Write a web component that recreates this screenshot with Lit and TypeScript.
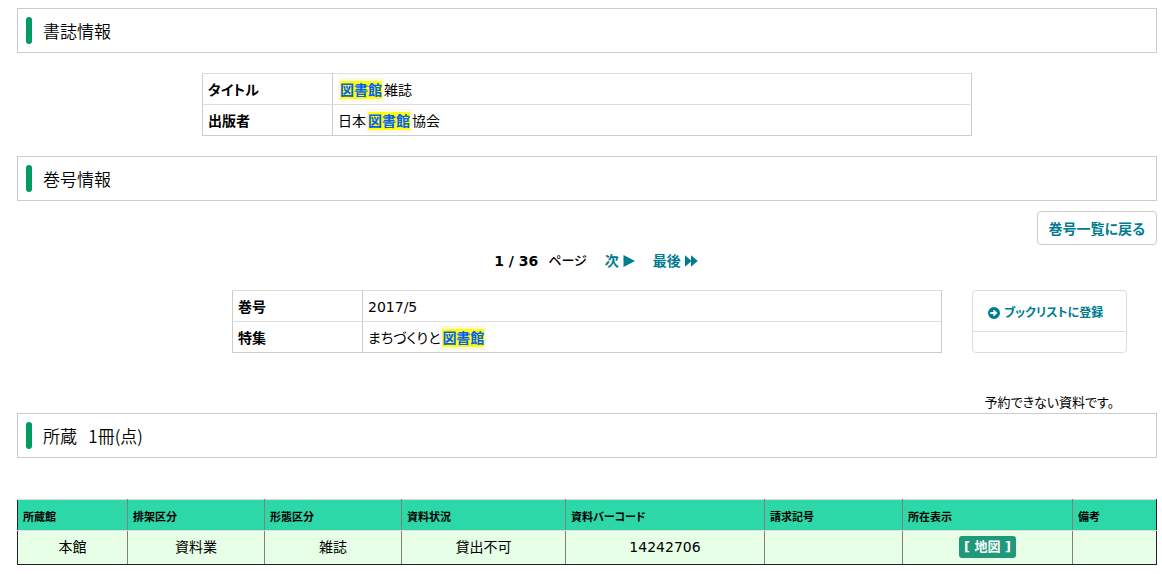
import { LitElement, html, css } from "lit";
import { customElement } from "lit/decorators.js";

const HOLDING_COLUMNS = [
  { name: "所蔵館", width: 110 },
  { name: "排架区分", width: 137 },
  { name: "形態区分", width: 137 },
  { name: "資料状況", width: 164 },
  { name: "資料バーコード", width: 199 },
  { name: "請求記号", width: 138 },
  { name: "所在表示", width: 170 },
  { name: "備考", width: 84 },
];
const HOLDING_TOTAL = HOLDING_COLUMNS.reduce((sum, c) => sum + c.width, 0);

@customElement("app-root")
export class AppRoot extends LitElement {
  static styles = css`
    :host {
      display: block;
      padding: 8px 5px 8px 17px;
      background: #fff;
      color: #000;
      font-family: "DejaVu Sans", "Noto Sans CJK JP", sans-serif;
      font-size: 14px;
      line-height: 20px;
      font-feature-settings: "palt";
    }
    * { box-sizing: border-box; }
    a { color: #007b8f; font-weight: bold; text-decoration: none; }
    .heading {
      display: flex;
      align-items: center;
      gap: 11px;
      margin: 0;
      padding: 8px;
      border: 1px solid #ccc;
      font-family: "Noto Sans CJK JP", sans-serif;
      font-size: 17px;
      font-weight: 350;
      line-height: 27px;
      white-space: pre;
    }
    .heading::before {
      content: "";
      width: 6px;
      height: 27px;
      border-radius: 3px;
      background: #009b63;
    }
    .info {
      width: 100%;
      table-layout: fixed;
      border-collapse: collapse;
      border: 1px solid #ccc;
    }
    .info th, .info td {
      height: 31px;
      padding: 2px 5px 0;
      border: 1px solid #ccc;
      border-top-color: #ddd;
      border-bottom-color: #ddd;
      text-align: left;
      white-space: nowrap;
    }
    .info tr:last-child > * { border-bottom-color: #ccc; }
    .info th { width: 130px; }
    .biblio { max-width: 770px; margin: 20px auto; }
    mark {
      display: inline-block;
      border: solid #fcf8e3;
      border-width: 3px 2px;
      background: #ff0;
      color: #0060ff;
      font-weight: bold;
      line-height: 18px;
    }
    .actions { display: flex; justify-content: flex-end; margin-top: 10px; }
    .back {
      height: 34px;
      padding: 2px 11px 0;
      border: 1px solid #ccc;
      border-radius: 4px;
      background: #fff;
      color: #007b8f;
      font: inherit;
      font-weight: bold;
      font-feature-settings: inherit;
    }
    .pager {
      display: flex;
      justify-content: center;
      gap: 18px;
      margin: 6px 0 19px;
      padding-left: 18px;
    }
    .pager a { display: flex; align-items: center; gap: 4px; }
    .count { display: flex; gap: 10px; font-weight: bold; }
    .unit { font-size: 13px; font-weight: 500; }
    .next, .last, .go { fill: currentColor; }
    .volume {
      display: flex;
      justify-content: flex-end;
      gap: 30px;
      padding-right: 30px;
    }
    .detail { flex: 0 1 710px; }
    .menu {
      width: 155px;
      flex: none;
      border: 1px solid #ddd;
      border-radius: 4px;
    }
    .register {
      display: flex;
      align-items: center;
      gap: 4px;
      height: 41px;
      padding: 3px 15px 0;
      border-bottom: 1px solid #ddd;
      font-size: 12px;
      white-space: nowrap;
    }
    .note { margin: 40px 43px 0 0; font-size: 13px; text-align: right; }
    .holdings {
      width: 100%;
      margin-top: 41px;
      table-layout: fixed;
      border-collapse: collapse;
      border: 1px solid #222;
    }
    .holdings th {
      height: 31px;
      padding: 5px 5px 0;
      border: 1px solid #808080;
      border-top-color: #ddd;
      border-bottom-color: #ddd;
      background: #2cd7a8;
      font-size: 11px;
      text-align: left;
      white-space: nowrap;
    }
    .holdings td {
      height: 34px;
      padding: 0 0 1px;
      border: 1px solid #808080;
      border-bottom-color: #222;
      background: #e6ffe6;
      text-align: center;
    }
    .holdings tr > :first-child { border-left-color: #222; }
    .holdings tr > :last-child { border-right-color: #222; }
    .map {
      display: inline-block;
      padding: 1px 5px;
      border-radius: 3px;
      background: #20997a;
      color: #fff;
      font-size: 13px;
    }
  `;

  render() {
    return html`
      <h2 class="heading">書誌情報</h2>
      <div class="biblio">
        <table class="info">
          <tr><th scope="row">タイトル</th><td><mark>図書館</mark>雑誌</td></tr>
          <tr><th scope="row">出版者</th><td>日本<mark>図書館</mark>協会</td></tr>
        </table>
      </div>

      <h2 class="heading">巻号情報</h2>
      <div class="actions"><button class="back" type="button">巻号一覧に戻る</button></div>
      <nav class="pager">
        <span class="count"><span>1 / 36</span><span class="unit">ページ</span></span>
        <a href="#next">次
          <svg class="next" width="12" height="12" viewBox="0 0 12 12" aria-hidden="true"><path d="M0.5 0 12 6 0.5 12Z" /></svg>
        </a>
        <a href="#last">最後
          <svg class="last" width="13" height="12" viewBox="0 0 13 12" aria-hidden="true"><path d="M0 0.3 6 5.5V0.3L12.8 6 6 11.7V6.5L0 11.7Z" /></svg>
        </a>
      </nav>

      <div class="volume">
        <div class="detail">
          <table class="info">
            <tr><th scope="row">巻号</th><td>2017/5</td></tr>
            <tr><th scope="row">特集</th><td>まちづくりと<mark>図書館</mark></td></tr>
          </table>
        </div>
        <div class="menu">
          <a class="register" href="#booklist">
            <svg class="go" width="12" height="12" viewBox="0 0 12 12" aria-hidden="true">
              <path fill-rule="evenodd" d="M6 0a6 6 0 1 0 0 12A6 6 0 0 0 6 0ZM2.3 5.1V6.9H6L4.8 8.1 6 9.3 9.4 6 6 2.7 4.8 3.9 6 5.1Z" />
            </svg>ブックリストに登録</a>
        </div>
      </div>
      <p class="note">予約できない資料です。</p>

      <h2 class="heading">所蔵   1冊(点)</h2>
      <table class="holdings">
        <colgroup>
          ${HOLDING_COLUMNS.map((c) => html`<col style="width:${(c.width / HOLDING_TOTAL) * 100}%" />`)}
        </colgroup>
        <thead>
          <tr>${HOLDING_COLUMNS.map((c) => html`<th scope="col">${c.name}</th>`)}</tr>
        </thead>
        <tbody>
          <tr>
            <td>本館</td>
            <td>資料業</td>
            <td>雑誌</td>
            <td>貸出不可</td>
            <td>14242706</td>
            <td></td>
            <td><a class="map" href="#map">[ 地図 ]</a></td>
            <td></td>
          </tr>
        </tbody>
      </table>
    `;
  }
}
